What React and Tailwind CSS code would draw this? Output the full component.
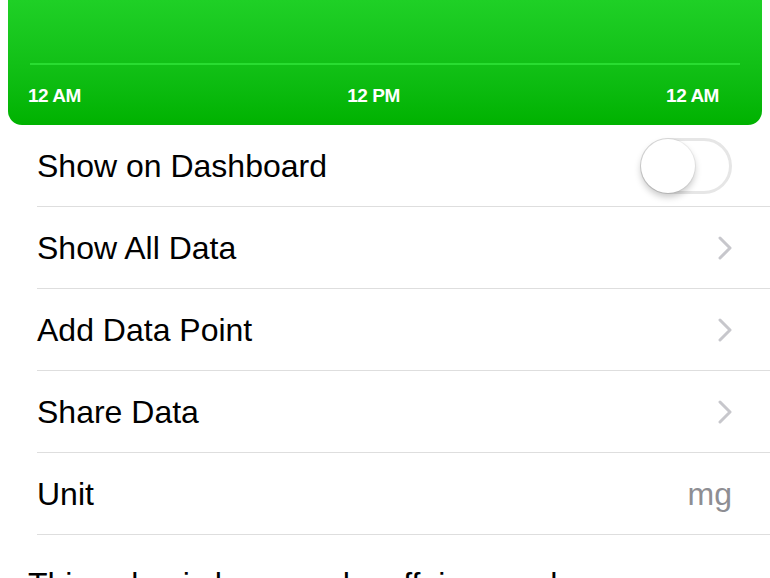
import React from "react";

const font = { fontFamily: '"Liberation Sans", Arial, sans-serif' };

const Chevron = () => (
  <svg width="14" height="24" viewBox="0 0 14 24" fill="none">
    <path d="M2 2 L12 12 L2 22" stroke="#c7c7cc" strokeWidth="3" strokeLinecap="round" strokeLinejoin="round" />
  </svg>
);

const Toggle = () => (
  <div className="relative w-[92px] h-[56px] rounded-full border-[3px] border-[#e6e6e6] bg-white">
    <div className="absolute left-[-2px] top-[-2px] w-[54px] h-[54px] rounded-full bg-white shadow-[0_4px_7px_rgba(0,0,0,0.22),0_0_0_1px_rgba(0,0,0,0.05)]" />
  </div>
);

const Row = ({ label, children }) => (
  <div className="flex items-center justify-between h-[82px] pr-[38px] border-b border-[#dedede]">
    <span className="text-[32px] text-black">{label}</span>
    {children}
  </div>
);

export default function App() {
  return (
    <div className="w-[770px] h-[578px] overflow-hidden bg-white" style={font}>
      <div className="mx-2 h-[125px] rounded-b-[14px] bg-gradient-to-b from-[#1fd026] to-[#00b200] px-5 pt-[63px]">
        <div className="h-[2px] bg-[#29dc31] mx-[2px]" />
        <div className="flex justify-between items-center mt-[17px] text-white font-bold text-[19px] tracking-tight pr-[23px]">
          <span>12 AM</span>
          <span>12 PM</span>
          <span>12 AM</span>
        </div>
      </div>
      <div className="ml-[37px]">
        <Row label="Show on Dashboard">
          <Toggle />
        </Row>
        <Row label="Show All Data">
          <Chevron />
        </Row>
        <Row label="Add Data Point">
          <Chevron />
        </Row>
        <Row label="Share Data">
          <Chevron />
        </Row>
        <Row label="Unit">
          <span className="text-[32px] text-[#8e8e93]">mg</span>
        </Row>
      </div>
      <p className="px-[28px] pt-[29px] text-[32px] text-black leading-tight">
        This value is how much caffeine you have consumed today.
      </p>
    </div>
  );
}
